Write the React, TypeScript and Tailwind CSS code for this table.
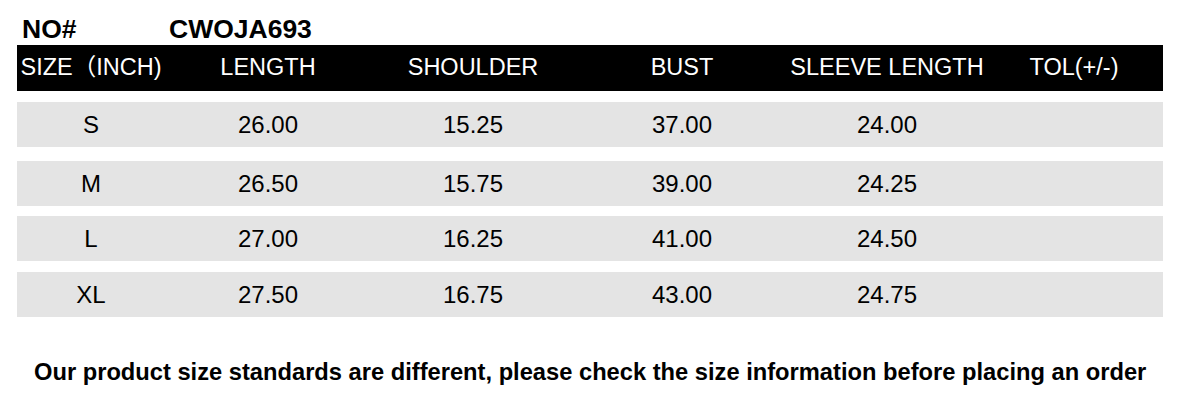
// Size chart for CWOJA693
const columns = [
  { label: "SIZE（INCH)", width: "w-[148px]" },
  { label: "LENGTH", width: "w-[206px]" },
  { label: "SHOULDER", width: "w-[204px]" },
  { label: "BUST", width: "w-[214px]" },
  { label: "SLEEVE LENGTH", width: "w-[196px]" },
  { label: "TOL(+/-)", width: "w-[178px]" },
];

const rows = [
  { size: "S", values: ["26.00", "15.25", "37.00", "24.00", ""], gap: "mt-[11px]" },
  { size: "M", values: ["26.50", "15.75", "39.00", "24.25", ""], gap: "mt-[14px]" },
  { size: "L", values: ["27.00", "16.25", "41.00", "24.50", ""], gap: "mt-[10px]" },
  { size: "XL", values: ["27.50", "16.75", "43.00", "24.75", ""], gap: "mt-[11px]" },
];

export default function App() {
  return (
    <div className="w-[1188px] h-[413px] bg-white text-black font-['Liberation_Sans','Noto_Sans_CJK_SC',Arial,sans-serif] overflow-hidden">
      <div className="flex pt-[16px] pl-[22px] text-[26.5px] leading-[26px] font-bold">
        <span className="w-[147px]">NO#</span>
        <span>CWOJA693</span>
      </div>

      <div className="w-[1146px] ml-[17px] mt-[3px]">
        <div className="flex h-[46px] items-center bg-black text-white text-[23.5px] leading-none">
          {columns.map((col) => (
            <div key={col.label} className={`${col.width} text-center whitespace-nowrap`}>
              {col.label}
            </div>
          ))}
        </div>

        {rows.map((row) => (
          <div
            key={row.size}
            className={`${row.gap} flex h-[45px] items-center bg-[#e4e4e4] text-[24px] leading-none`}
          >
            {[row.size, ...row.values].map((v, i) => (
              <div key={i} className={`${columns[i].width} text-center`}>
                {v}
              </div>
            ))}
          </div>
        ))}
      </div>

      <p className="mt-[43px] pl-[34px] text-[23.7px] leading-[24px] font-bold whitespace-nowrap">
        Our product size standards are different, please check the size information before placing an order
      </p>
    </div>
  );
}
